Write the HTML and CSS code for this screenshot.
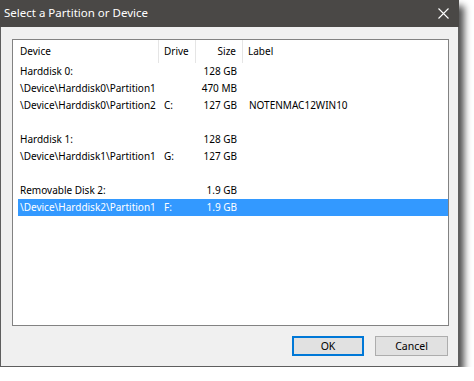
FILE: index.html
```html
<!DOCTYPE html>
<html>
<head>
<meta charset="utf-8">
<link rel="stylesheet" href="styles.css">
</head>
<body>
<div class="window">
  <div class="titlebar">
    <span class="title">Select a Partition or Device</span>
    <svg class="close" width="11" height="11" viewBox="0 0 11 11"><path d="M0.5 0.5L10.5 10.5M10.5 0.5L0.5 10.5" stroke="#fff" stroke-width="1.1"/></svg>
  </div>
  <div class="body">
    <div class="listbox">
      <div class="header">
        <div class="hcell c-dev">Device</div>
        <div class="hcell c-drv">Drive</div>
        <div class="hcell c-size">Size</div>
        <div class="hcell c-label">Label</div>
      </div>
      <div class="rows">
        <div class="row"><span class="dev">Harddisk 0:</span><span class="drv"></span><span class="size">128 GB</span><span class="label"></span></div>
        <div class="row"><span class="dev">\Device\Harddisk0\Partition1</span><span class="drv"></span><span class="size">470 MB</span><span class="label"></span></div>
        <div class="row"><span class="dev">\Device\Harddisk0\Partition2</span><span class="drv">C:</span><span class="size">127 GB</span><span class="label">NOTENMAC12WIN10</span></div>
        <div class="row"></div>
        <div class="row"><span class="dev">Harddisk 1:</span><span class="drv"></span><span class="size">128 GB</span><span class="label"></span></div>
        <div class="row"><span class="dev">\Device\Harddisk1\Partition1</span><span class="drv">G:</span><span class="size">127 GB</span><span class="label"></span></div>
        <div class="row"></div>
        <div class="row"><span class="dev">Removable Disk 2:</span><span class="drv"></span><span class="size">1.9 GB</span><span class="label"></span></div>
        <div class="row selected"><span class="dev">\Device\Harddisk2\Partition1</span><span class="drv">F:</span><span class="size">1.9 GB</span><span class="label"></span></div>
      </div>
    </div>
    <div class="buttons">
      <button class="btn default">OK</button>
      <button class="btn">Cancel</button>
    </div>
  </div>
</div>
</body>
</html>
```
FILE: styles.css
```css
html, body {
  margin: 0;
  padding: 0;
  background: #ffffff;
}
body {
  font-family: "Noto Sans", "Liberation Sans", sans-serif;
  font-size: 10px;
  color: #000;
}
.window {
  width: 459px;
  height: 367px;
  box-sizing: border-box;
  display: flex;
  flex-direction: column;
  background: #f0f0f0;
  border: 1px solid #5e5e5e;
  border-top: none;
  box-shadow: 5px 6px 7px rgba(0,0,0,0.7);
}
.titlebar {
  height: 27px;
  margin: 0 -1px;
  background: #4a4846;
  color: #fff;
  display: flex;
  align-items: center;
  justify-content: space-between;
  padding: 0 10px 0 4px;
  flex: none;
}
.title {
  font-size: 11.5px;
  position: relative;
  top: -1px;
}
.close {
  display: block;
}
.body {
  flex: 1;
  display: flex;
  flex-direction: column;
  padding: 12px 9px 9px 11px;
}
.listbox {
  height: 287px;
  box-sizing: border-box;
  border: 1px solid #828282;
  background: #fff;
  flex: none;
}
.header {
  display: flex;
  height: 23px;
}
.hcell {
  box-sizing: border-box;
  border-right: 1px solid #e5e5e5;
  line-height: 23px;
  height: 23px;
}
.c-dev { width: 146px; padding-left: 7px; }
.c-drv { width: 37px; padding-left: 5px; }
.c-size { width: 47px; text-align: right; padding-right: 6px; }
.c-label { flex: 1; padding-left: 5px; border-right: none; }
.rows {
  padding-left: 5px;
}
.row {
  display: flex;
  height: 17px;
  line-height: 17px;
  white-space: nowrap;
}
.row.selected {
  background: #3399ff;
  color: #fff;
}
.row .dev { width: 141px; box-sizing: border-box; padding-left: 2px; }
.row .drv { width: 37px; box-sizing: border-box; padding-left: 5px; }
.row .size { width: 47px; box-sizing: border-box; text-align: right; padding-right: 6px; }
.row .label { flex: 1; padding-left: 6px; }
.buttons {
  display: flex;
  justify-content: flex-end;
  gap: 11px;
  margin-top: 10px;
  padding-right: 1px;
}
.btn {
  font-family: "Noto Sans", "Liberation Sans", sans-serif;
  font-size: 10.5px;
  width: 73px;
  height: 20px;
  box-sizing: border-box;
  background: #e1e1e1;
  border: 1px solid #adadad;
  padding: 0;
  margin: 0;
  color: #000;
}
.btn.default {
  border: 2px solid #0078d7;
  width: 72px;
}
```
